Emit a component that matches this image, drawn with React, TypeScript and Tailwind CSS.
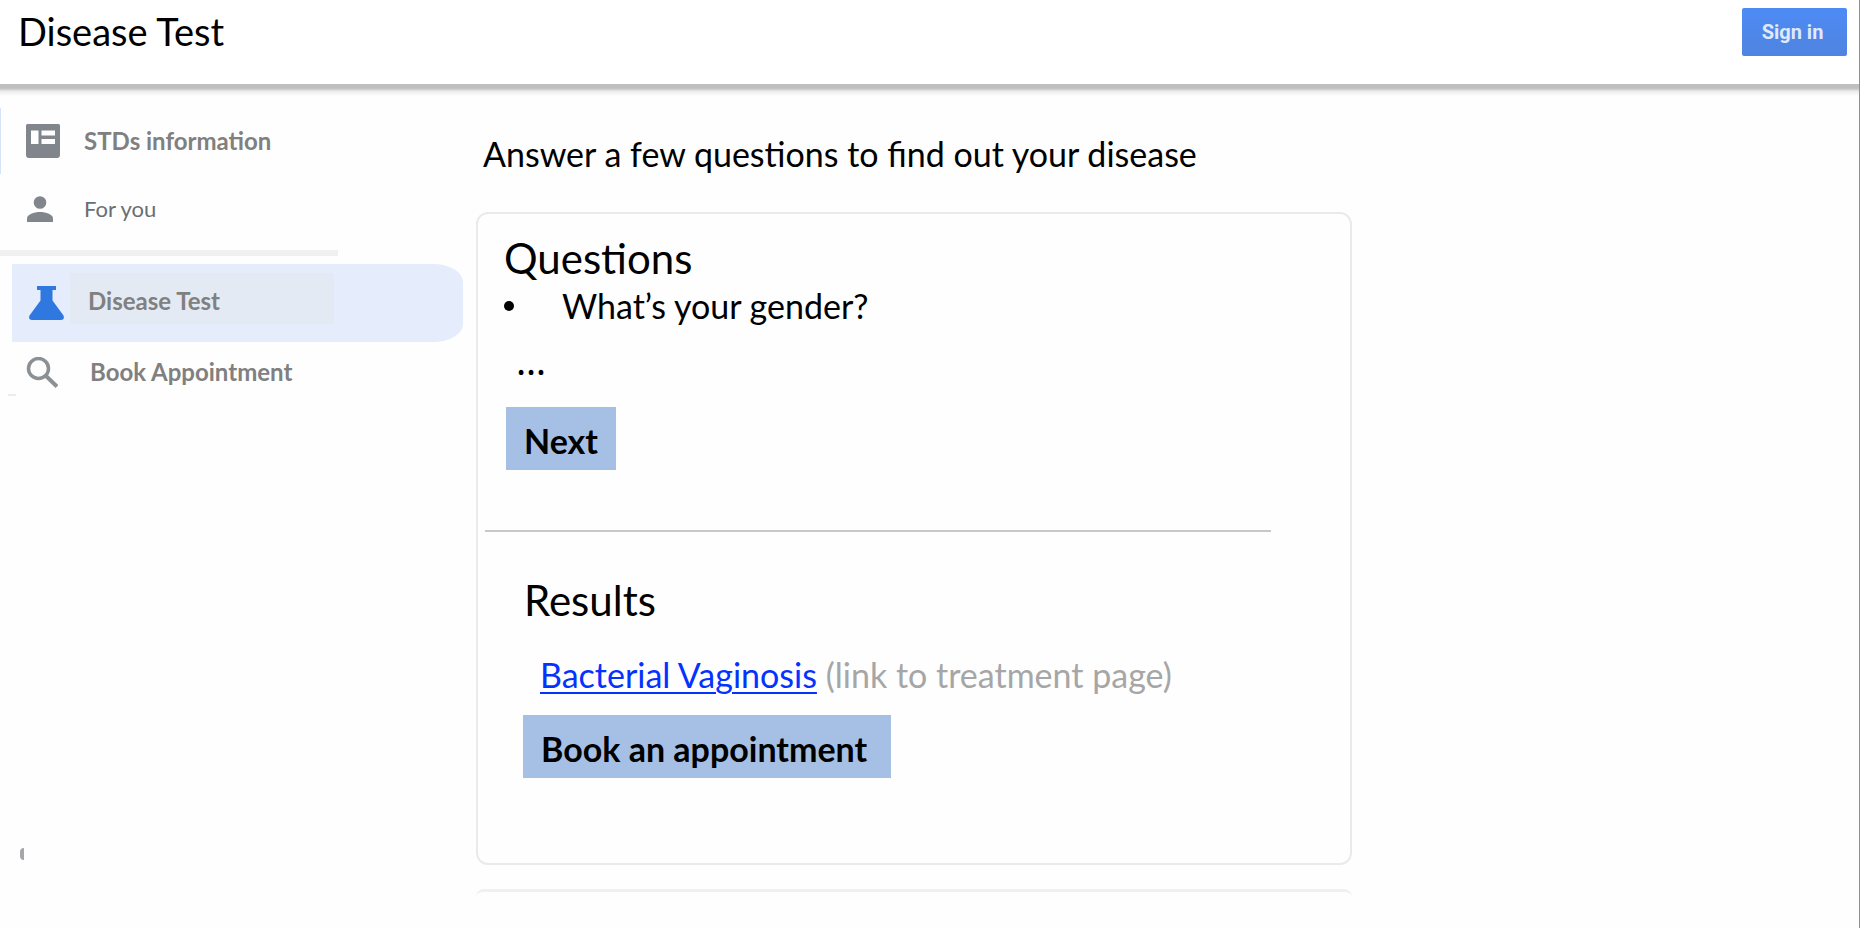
import type { ReactNode } from "react";

type NavLinkProps = {
  icon: ReactNode;
  children: ReactNode;
  className: string;
};

function NavLink({ icon, children, className }: NavLinkProps) {
  return (
    <a href="#" className={`flex items-center ${className}`}>
      <span className="flex w-10 shrink-0 items-center">{icon}</span>
      {children}
    </a>
  );
}

function ArticleIcon() {
  return (
    <svg viewBox="0 0 34 34" className="h-[34px] w-[34px]" aria-hidden="true">
      <path
        fill="#80868b"
        fillRule="evenodd"
        d="M1.500 0h31A1.500 1.500 0 0 1 34 1.500V31a3 3 0 0 1-3 3H3a3 3 0 0 1-3-3V1.500A1.500 1.500 0 0 1 1.500 0zM5 6.500v13.500h7.500V6.500zM15.500 6.500v5H29v-5zM15.500 15v5H29v-5z"
      />
    </svg>
  );
}

function PersonIcon() {
  return (
    <svg viewBox="0 0 26 26" className="h-[26px] w-[26px]" aria-hidden="true">
      <circle cx="13" cy="6.500" r="6.300" fill="#80868b" />
      <path fill="#80868b" d="M0 26v-3.500C0 18.500 7 16 13 16s13 2.500 13 6.500V26z" />
    </svg>
  );
}

function FlaskIcon() {
  return (
    <svg viewBox="0 0 35 34" className="h-[34px] w-[35px]" aria-hidden="true">
      <path
        fill="#2f78e0"
        d="M8 0h19v4h-3.500v10.500L34.500 29.500Q36 34 32 34H3Q-1 34 .5 29.500L11.500 14.500V4H8z"
      />
    </svg>
  );
}

function SearchIcon() {
  return (
    <svg viewBox="0 0 32 31" className="h-[31px] w-8" fill="none" stroke="#8b9094" aria-hidden="true">
      <circle cx="12.500" cy="11.500" r="10" strokeWidth="3.500" />
      <path d="M19.500 18.500 31 29.500" strokeWidth="4" />
    </svg>
  );
}

export default function App() {
  return (
    <div className="flex min-h-screen flex-col border-r border-[#8f8f94] bg-[#fefefe] font-['Lato',sans-serif] text-black">
      <header className="flex h-[84px] items-start justify-between bg-white pt-2 pr-3 pl-[18px]">
        <h1 className="text-[38px] leading-[46px]">Disease Test</h1>
        <button
          type="button"
          className="h-12 w-[105px] rounded-xs bg-linear-to-b from-[#4d8bf5] to-[#4f84e0] pr-1 font-['Roboto',sans-serif] text-xl font-bold text-[#dfe9fb]"
        >
          Sign in
        </button>
      </header>
      <div className="h-3 bg-linear-to-b from-[#bfbfbf] from-35% via-[#ebebeb] via-60% to-[#fefefe]" />

      <div className="flex flex-1 items-start">
        <nav className="flex w-[463px] shrink-0 flex-col text-2xl font-bold text-[#808080]">
          <NavLink
            icon={<ArticleIcon />}
            className="mt-3 h-[66px] gap-[18px] border-l border-[#d5e3fc] pl-[25px]"
          >
            STDs information
          </NavLink>
          <NavLink icon={<PersonIcon />} className="h-[70px] gap-[17px] pl-[27px] text-[22px] font-normal text-[#6a6e72]">
            For you
          </NavLink>
          <hr className="mt-[6px] h-[6px] w-[338px] border-0 bg-[#f0f0f0]" />
          <a
            href="#"
            aria-current="page"
            className="mt-2 ml-3 flex h-[78px] items-start rounded-r-[30px_18px] bg-[#e5ecfc] pt-[9px] pl-[17px]"
          >
            <span className="mt-[13px] flex w-[41px] shrink-0">
              <FlaskIcon />
            </span>
            <span className="flex h-[51px] w-[264px] items-center bg-[#e4eaf4] pt-1 pl-[18px]">Disease Test</span>
          </a>
          <NavLink icon={<SearchIcon />} className="h-[52px] gap-6 pt-2 pl-[26px]">
            Book Appointment
          </NavLink>
          <span className="ml-2 h-[2px] w-2 bg-[#ececec]" />
          <span className="mt-[452px] ml-5 h-3 w-1 rounded-l-full bg-[#a3a6aa]" />
        </nav>

        <main className="mr-4 ml-[13px] flex max-w-[876px] flex-1 flex-col">
          <p className="mt-[38px] pl-[7px] text-[34px] leading-10">Answer a few questions to find out your disease</p>

          <div className="mt-[38px] flex flex-col items-start rounded-xl border-2 border-[#e9ebeb] pt-5 pb-[85px]">
            <section className="flex flex-col items-start pl-[26px]">
              <h2 className="text-[42px] leading-12">Questions</h2>
              <ul className="mt-1 text-[34px] leading-10">
                <li className="flex items-center">
                  <span className="mr-12 h-[10px] w-[10px] rounded-full bg-black" />
                  What’s your gender?
                </li>
              </ul>
              <p className="mt-[14px] pl-3 font-['Noto_Sans',sans-serif] text-[38px] leading-10">…</p>
              <button
                type="button"
                className="mt-[27px] ml-[2px] h-[63px] bg-[#a5c0e4] px-[18px] pt-1 text-[34px] leading-10 font-bold"
              >
                Next
              </button>
            </section>

            <hr className="mt-[60px] mr-[79px] ml-[7px] h-[2px] self-stretch border-0 bg-[#c8c8c8]" />

            <section className="mt-11 flex flex-col items-start pl-[45px]">
              <h2 className="pl-px text-[42px] leading-12">Results</h2>
              <p className="mt-[31px] pl-[17px] text-[34px] leading-10 text-[#a6a6a6]">
                <a href="#" className="text-[#0432ff] underline decoration-2 underline-offset-4">
                  Bacterial Vaginosis
                </a>{" "}
                (link to treatment page)
              </p>
              <button
                type="button"
                className="mt-5 h-[63px] bg-[#a5c0e4] pt-1 pr-6 pl-[18px] text-[34px] leading-10 font-bold"
              >
                Book an appointment
              </button>
            </section>
          </div>

          <div className="mt-6 h-2 rounded-t-xl border-t-3 border-[#eff1f1]" />
        </main>
      </div>
    </div>
  );
}
